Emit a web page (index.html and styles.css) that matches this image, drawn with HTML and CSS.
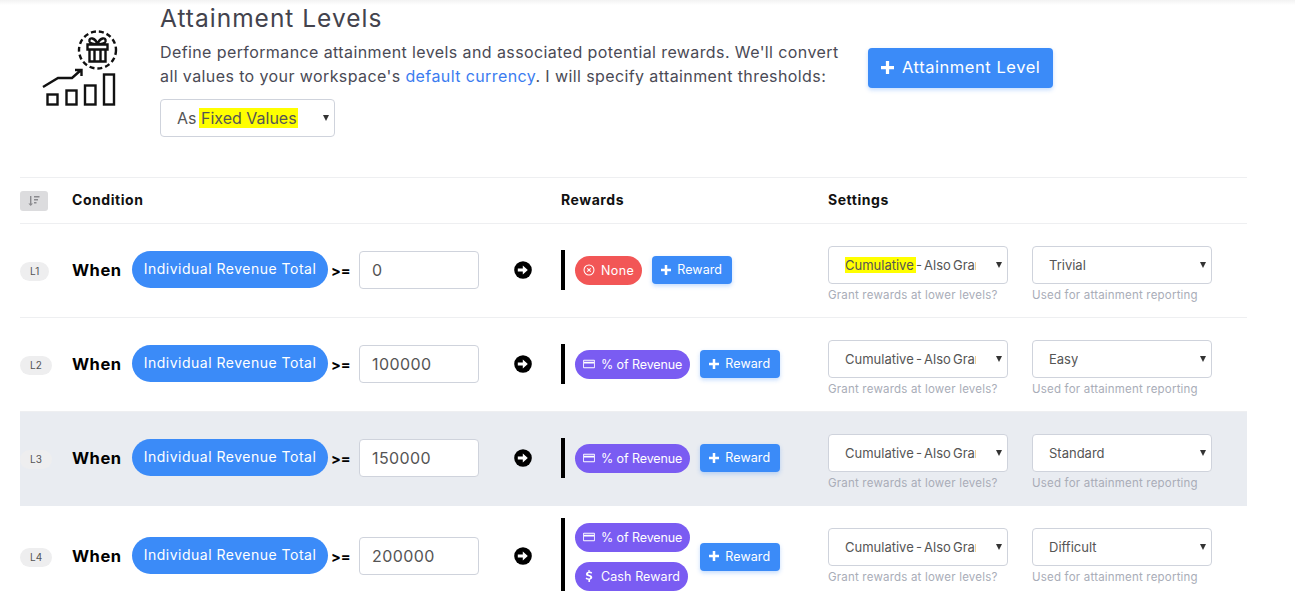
FILE: index.html
```html
<!DOCTYPE html>
<html lang="en">
<head>
<meta charset="utf-8">
<title>Attainment Levels</title>
<link rel="stylesheet" href="styles.css">
</head>
<body>
<div class="page">
  <section class="hero">
    <svg class="hero-icon" viewBox="40 28 80 80" fill="none" stroke="#111" stroke-width="2.400">
      <rect x="47.5" y="94.5" width="10" height="10"/>
      <rect x="66.5" y="90.5" width="10" height="14"/>
      <rect x="85" y="85.5" width="10.5" height="19"/>
      <rect x="104" y="74.5" width="10" height="30"/>
      <path d="M43 87l15-9h14l9-8M75 70h6.5v6"/>
      <circle cx="97.5" cy="50" r="18.5" stroke-width="2.4" stroke-dasharray="5 3"/>
      <path d="M87.500 44.500h20v5h-20zM89.500 49.500v12h16v-12M94.500 49.500v12M100.500 49.500v12M97.500 44.500c-2-7-9-8-8-3 .5 2 5 3 8 3zM97.500 44.500c2-7 9-8 8-3-.5 2-5 3-8 3z"/>
    </svg>
    <div class="hero-body">
      <h1 class="hero-title">Attainment Levels</h1>
      <p class="hero-text">Define performance attainment levels and associated potential rewards. We'll convert all values to your workspace's <a class="link" href="#">default currency</a>. I will specify attainment thresholds:</p>
      <div class="sel sel-hero"><span class="sel-text">As <mark class="marker">Fixed Values</mark></span></div>
    </div>
    <button class="btn btn-large" type="button"><svg class="plus plus-large" viewBox="0 0 12 12"><path d="M4.500 0h3v4.500H12v3H7.500V12h-3V7.500H0v-3h4.500z"/></svg>Attainment Level</button>
  </section>

  <div class="table">
    <div class="row row-head">
      <div><span class="sort"><svg viewBox="0 0 12 12" width="12" height="12" fill="#8a8a8e"><path d="M2 1h1.400v7.500H5L2.700 11 .4 8.500H2zM6 1h5.500v1.500H6zM6 4h4v1.500H6zM6 7h2.500v1.500H6z"/></svg></span></div>
      <div class="head-label">Condition</div>
      <div class="head-label">Rewards</div>
      <div class="head-label">Settings</div>
    </div>

    <div class="row">
      <div><span class="level">L1</span></div>
      <div class="cond">
        <span class="when">When</span><span class="metric">Individual Revenue Total</span><span class="op">&gt;=</span><input class="field" value="0">
        <svg class="go" viewBox="0 0 18 18"><circle cx="9" cy="9" r="8.800" fill="#000"/><path d="M3.800 7.500h5V4.600L13.800 9l-5 4.400v-2.900h-5z" fill="#fff"/></svg>
      </div>
      <div class="rewards">
        <span class="bar"></span>
        <div class="reward-set">
          <div class="tags"><span class="tag tag-none"><svg class="tag-icon" viewBox="0 0 14 14" fill="none" stroke="#fff" stroke-width="1.200"><circle cx="7" cy="7" r="5.800"/><path d="M5 5l4 4M9 5l-4 4"/></svg>None</span></div>
          <button class="btn btn-small" type="button"><svg class="plus" viewBox="0 0 12 12"><path d="M4.500 0h3v4.500H12v3H7.500V12h-3V7.500H0v-3h4.500z"/></svg>Reward</button>
        </div>
      </div>
      <div class="settings">
        <div class="setting"><div class="sel"><span class="sel-text"><mark class="marker marker-small">Cumulative </mark>- Also Grant</span></div><p class="hint">Grant rewards at lower levels?</p></div>
        <div class="setting"><div class="sel"><span class="sel-text">Trivial</span></div><p class="hint">Used for attainment reporting</p></div>
      </div>
    </div>

    <div class="row">
      <div><span class="level">L2</span></div>
      <div class="cond">
        <span class="when">When</span><span class="metric">Individual Revenue Total</span><span class="op">&gt;=</span><input class="field" value="100000">
        <svg class="go" viewBox="0 0 18 18"><circle cx="9" cy="9" r="8.800" fill="#000"/><path d="M3.800 7.500h5V4.600L13.800 9l-5 4.400v-2.900h-5z" fill="#fff"/></svg>
      </div>
      <div class="rewards">
        <span class="bar"></span>
        <div class="reward-set">
          <div class="tags"><span class="tag tag-purple"><svg class="tag-icon" viewBox="0 0 14 14" fill="#fff"><path d="M1 2h12a.8.8 0 0 1 .8.8v8.400a.8.8 0 0 1-.8.8H1a.8.8 0 0 1-.8-.8V2.800A.8.8 0 0 1 1 2zm.2 1.200v1.300h11.600V3.200zm0 3.300v4.300h11.600V6.500z"/></svg>% of Revenue</span></div>
          <button class="btn btn-small" type="button"><svg class="plus" viewBox="0 0 12 12"><path d="M4.500 0h3v4.500H12v3H7.500V12h-3V7.500H0v-3h4.500z"/></svg>Reward</button>
        </div>
      </div>
      <div class="settings">
        <div class="setting"><div class="sel"><span class="sel-text">Cumulative - Also Grant</span></div><p class="hint">Grant rewards at lower levels?</p></div>
        <div class="setting"><div class="sel"><span class="sel-text">Easy</span></div><p class="hint">Used for attainment reporting</p></div>
      </div>
    </div>

    <div class="row row-active">
      <div><span class="level">L3</span></div>
      <div class="cond">
        <span class="when">When</span><span class="metric">Individual Revenue Total</span><span class="op">&gt;=</span><input class="field" value="150000">
        <svg class="go" viewBox="0 0 18 18"><circle cx="9" cy="9" r="8.800" fill="#000"/><path d="M3.800 7.500h5V4.600L13.800 9l-5 4.400v-2.900h-5z" fill="#fff"/></svg>
      </div>
      <div class="rewards">
        <span class="bar"></span>
        <div class="reward-set">
          <div class="tags"><span class="tag tag-purple"><svg class="tag-icon" viewBox="0 0 14 14" fill="#fff"><path d="M1 2h12a.8.8 0 0 1 .8.8v8.400a.8.8 0 0 1-.8.8H1a.8.8 0 0 1-.8-.8V2.800A.8.8 0 0 1 1 2zm.2 1.200v1.300h11.600V3.200zm0 3.300v4.300h11.600V6.500z"/></svg>% of Revenue</span></div>
          <button class="btn btn-small" type="button"><svg class="plus" viewBox="0 0 12 12"><path d="M4.500 0h3v4.500H12v3H7.500V12h-3V7.500H0v-3h4.500z"/></svg>Reward</button>
        </div>
      </div>
      <div class="settings">
        <div class="setting"><div class="sel"><span class="sel-text">Cumulative - Also Grant</span></div><p class="hint">Grant rewards at lower levels?</p></div>
        <div class="setting"><div class="sel"><span class="sel-text">Standard</span></div><p class="hint">Used for attainment reporting</p></div>
      </div>
    </div>

    <div class="row row-tall">
      <div><span class="level">L4</span></div>
      <div class="cond">
        <span class="when">When</span><span class="metric">Individual Revenue Total</span><span class="op">&gt;=</span><input class="field" value="200000">
        <svg class="go" viewBox="0 0 18 18"><circle cx="9" cy="9" r="8.800" fill="#000"/><path d="M3.800 7.500h5V4.600L13.800 9l-5 4.400v-2.900h-5z" fill="#fff"/></svg>
      </div>
      <div class="rewards rewards-tall">
        <span class="bar"></span>
        <div class="reward-set">
          <div class="tags">
            <span class="tag tag-purple"><svg class="tag-icon" viewBox="0 0 14 14" fill="#fff"><path d="M1 2h12a.8.8 0 0 1 .8.8v8.400a.8.8 0 0 1-.8.8H1a.8.8 0 0 1-.8-.8V2.800A.8.8 0 0 1 1 2zm.2 1.200v1.300h11.600V3.200zm0 3.300v4.300h11.600V6.500z"/></svg>% of Revenue</span>
            <span class="tag tag-purple tag-cash"><svg class="tag-icon" viewBox="0 0 14 14" fill="#fff"><path d="M6.300 0h1.400v1.800c1.300.1 2.300.6 3 1.200l-.9 1.300c-.7-.6-1.500-.9-2.400-.9-.9 0-1.500.4-1.500 1 0 .7.700 1 1.900 1.400 1.600.5 3 1.100 3 2.800 0 1.500-1.100 2.500-2.600 2.800V14H6.300v-2.500c-1.300-.1-2.500-.7-3.300-1.400l1-1.300c.8.700 1.700 1.100 2.700 1.100 1 0 1.700-.4 1.700-1.100 0-.8-.8-1.100-2-1.500C4.900 7.300 3.500 6.700 3.500 5c0-1.500 1.100-2.600 2.800-2.900z"/></svg>Cash Reward</span>
          </div>
          <button class="btn btn-small" type="button"><svg class="plus" viewBox="0 0 12 12"><path d="M4.500 0h3v4.500H12v3H7.500V12h-3V7.500H0v-3h4.500z"/></svg>Reward</button>
        </div>
      </div>
      <div class="settings">
        <div class="setting"><div class="sel"><span class="sel-text">Cumulative - Also Grant</span></div><p class="hint">Grant rewards at lower levels?</p></div>
        <div class="setting"><div class="sel"><span class="sel-text">Difficult</span></div><p class="hint">Used for attainment reporting</p></div>
      </div>
    </div>
  </div>
</div>
</body>
</html>
```
FILE: styles.css
```css
* { box-sizing: border-box; }
html, body { margin: 0; height: 100%; overflow: hidden; background: #fff; }
body { font-family: Inter, "Liberation Sans", sans-serif; color: #4a4a55; }
.page { padding: 0 48px 0 20px; background: linear-gradient(#f2f2f2, #fff 5px) no-repeat; }

.hero { display: flex; align-items: flex-start; height: 177px; padding: 6px 0 0 20px; }
.hero-icon { width: 80px; height: 80px; margin-top: 22px; flex: none; }
.hero-body { width: 690px; margin-left: 40px; flex: none; }
.hero-title { margin: 0 0 10px; font-size: 24.500px; line-height: 24px; font-weight: 400; letter-spacing: 1px; color: #43434d; }
.hero-text { margin: 0 0 11px; font-size: 16px; line-height: 24px; letter-spacing: .4px; width: 690px; }
.link { color: #3b7cf0; text-decoration: none; }

.sel { position: relative; display: flex; align-items: center; width: 180px; height: 38px; padding: 0 31px 0 16px; background: #fff; border: 1px solid #cfd3dc; border-radius: 4px; font-size: 13px; word-spacing: -1.500px; color: #555; }
.sel::after { content: ""; position: absolute; right: 5px; top: 15px; border-left: 3px solid transparent; border-right: 3px solid transparent; border-top: 6px solid #333; }
.sel-hero { width: 175px; font-size: 16px; word-spacing: 0; }
.sel-text { display: block; overflow: hidden; white-space: nowrap; }
.marker { background: #ffff00; color: #555; margin: 0 0 0 -2px; padding: 3px 1px 3px 2px; border-radius: 2px; }
.marker-small { margin-left: -1px; padding: 2px 0 2px 1px; }

.btn { display: inline-flex; align-items: center; border: 0; border-radius: 4px; background: #3b8bf8; color: #fff; font-family: inherit; box-shadow: 0 2px 4px rgba(59, 139, 248, .3); }
.btn-large { width: 185px; height: 40px; margin: 42px 0 0 18px; padding: 0 0 2px 13px; font-size: 16.500px; letter-spacing: .55px; }
.btn-small { width: 80px; height: 28px; padding: 0 0 1px 9px; font-size: 12.500px; letter-spacing: .1px; flex: none; }
.plus { width: 10px; height: 10px; margin-right: 6px; fill: #fff; flex: none; }
.plus-large { width: 13px; height: 13px; margin-right: 8px; }

.table { border-top: 1px solid #eeeff1; }
.row { display: grid; grid-template-columns: 52px 489px 267px 1fr; align-items: center; min-height: 94px; padding-bottom: 1px; border-bottom: 1px solid #eeeff1; }
.row-head { min-height: 46px; padding-bottom: 0; color: #111; }
.row-active { background: #e9ecf1; border-bottom-color: #e9ecf1; }
.row-tall { min-height: 100px; padding-bottom: 0; border-bottom: 0; }

.head-label { margin-bottom: 2px; font-size: 14px; font-weight: 700; letter-spacing: .55px; color: #111; }
.sort { display: flex; align-items: center; justify-content: center; width: 28px; height: 20px; background: #dcdcde; border-radius: 3px; }
.level { display: inline-flex; align-items: center; padding: 0 10px; height: 19px; background: #eeeeef; border-radius: 10px; font-size: 10px; color: #555; }

.cond { display: flex; align-items: center; }
.when { width: 60px; font-size: 16.500px; font-weight: 700; letter-spacing: .5px; color: #000; }
.metric { display: flex; align-items: center; justify-content: center; width: 196px; height: 37px; margin-top: -1px; padding-bottom: 2px; background: #3b8bf8; border-radius: 19px; font-size: 14px; letter-spacing: .5px; color: #fff; }
.op { width: 31px; padding-left: 3px; font-size: 14.500px; font-weight: 700; color: #000; }
.field { width: 120px; height: 38px; padding: 0 12px; border: 1px solid #cfd3dc; border-radius: 4px; font: 16px Inter, "Liberation Sans", sans-serif; letter-spacing: .4px; color: #555; background: #fff; }
.go { width: 18px; height: 18px; margin-left: 35px; flex: none; }

.rewards { display: flex; align-items: stretch; }
.rewards-tall { margin-bottom: 4px; }
.bar { width: 4px; min-height: 40px; background: #000; flex: none; }
.reward-set { display: flex; align-items: center; gap: 10px; margin-left: 10px; }
.rewards-tall .reward-set { padding-top: 5px; }
.tags { display: flex; flex-direction: column; align-items: flex-start; gap: 10px; }
.tag { display: inline-flex; align-items: center; height: 29px; padding: 0 8px; border-radius: 15px; font-size: 12.500px; letter-spacing: -.1px; color: #fff; white-space: nowrap; }
.tag-none { background: #f25656; letter-spacing: .4px; }
.tag-purple { background: #7a5cf2; }
.tag-cash { letter-spacing: .1px; }
.tag-icon { width: 12px; height: 12px; margin-right: 6px; flex: none; }

.settings { display: flex; gap: 24px; align-self: start; padding-top: 22px; }
.setting { width: 180px; }
.hint { margin: 5px 0 0; font-size: 11.500px; line-height: 13px; letter-spacing: .2px; color: #a9adb8; white-space: nowrap; }
```
